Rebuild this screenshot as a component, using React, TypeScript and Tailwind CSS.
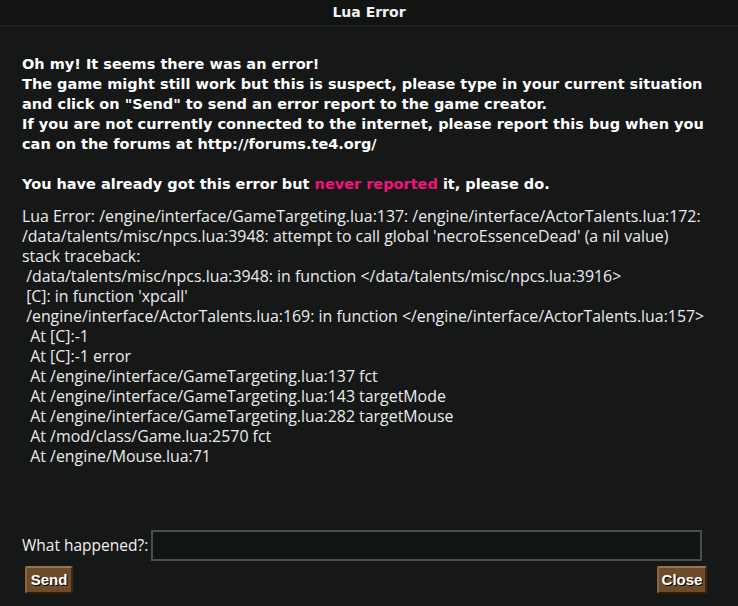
import React from 'react';

const intro = [
  'Oh my! It seems there was an error!',
  'The game might still work but this is suspect, please type in your current situation',
  'and click on "Send" to send an error report to the game creator.',
  'If you are not currently connected to the internet, please report this bug when you',
  'can on the forums at http://forums.te4.org/',
];

const trace = [
  'Lua Error: /engine/interface/GameTargeting.lua:137: /engine/interface/ActorTalents.lua:172:',
  "/data/talents/misc/npcs.lua:3948: attempt to call global 'necroEssenceDead' (a nil value)",
  'stack traceback:',
  ' /data/talents/misc/npcs.lua:3948: in function </data/talents/misc/npcs.lua:3916>',
  " [C]: in function 'xpcall'",
  ' /engine/interface/ActorTalents.lua:169: in function </engine/interface/ActorTalents.lua:157>',
  '  At [C]:-1',
  '  At [C]:-1 error',
  '  At /engine/interface/GameTargeting.lua:137 fct',
  '  At /engine/interface/GameTargeting.lua:143 targetMode',
  '  At /engine/interface/GameTargeting.lua:282 targetMouse',
  '  At /mod/class/Game.lua:2570 fct',
  '  At /engine/Mouse.lua:71',
];

const GameButton: React.FC<{ label: string; width: string }> = ({ label, width }) => (
  <button className={`${width} h-[28px] pb-[1px] rounded-[2px] border-2 border-t-[#9a7450] border-l-[#8a6644] border-r-[#3e2814] border-b-[#2e1c0c] bg-[#6e4b2a] text-white font-bold text-[15px] leading-none font-['Liberation_Sans',sans-serif] [text-shadow:1px_1px_0_#000]`}>
    {label}
  </button>
);

export default function App() {
  return (
    <div className="w-[738px] h-[606px] bg-[#161717] text-white flex flex-col overflow-hidden font-['DejaVu_Sans',sans-serif]">
      {/* title bar */}
      <div className="h-[27px] shrink-0 bg-[#121313] border-b-2 border-[#1f2020] flex items-center justify-center">
        <span className="font-bold text-[14px] text-[#f2f2f2]">Lua Error</span>
      </div>

      <div className="flex flex-col px-[22px] pt-[27px] flex-1">
        <div className="font-bold text-[14.5px] leading-[20px] text-white">
          {intro.map((line, i) => (
            <div key={i} className="whitespace-nowrap">{line}</div>
          ))}
          <div className="h-[20px]" />
          <div className="whitespace-nowrap">
            You have already got this error but <span className="text-[#f2127a]">never reported</span> it, please do.
          </div>
        </div>

        <div className="mt-[12px] text-[15.9px] leading-[20px] text-[#ececec] font-['Open_Sans',sans-serif]">
          {trace.map((line, i) => (
            <div key={i} className="whitespace-pre">{line}</div>
          ))}
        </div>

        <div className="flex-1" />

        <div className="flex items-center gap-[3px] mr-[14px]">
          <span className="text-[15.5px] text-[#f0f0f0] font-['Open_Sans',sans-serif]">What happened?:</span>
          <input className="h-[31px] flex-1 bg-[#0f1414] border-2 border-[#4b4d4d] outline-none text-white px-2" />
        </div>

        <div className="flex justify-between pl-[3px] pr-[9px] mt-[5px] mb-[12px]">
          <GameButton label="Send" width="w-[48px]" />
          <GameButton label="Close" width="w-[50px]" />
        </div>
      </div>
    </div>
  );
}
